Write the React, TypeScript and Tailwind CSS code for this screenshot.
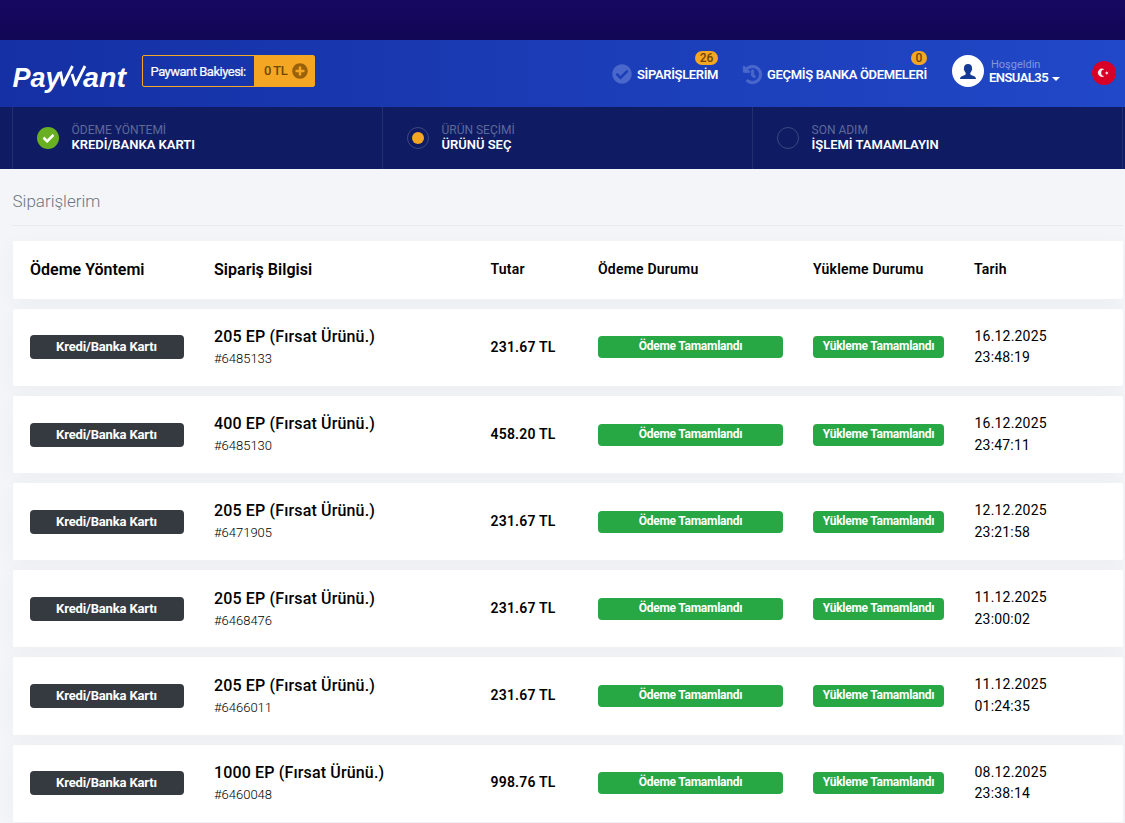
import { FaCheck, FaCheckCircle, FaHistory, FaPlusCircle } from "react-icons/fa";

interface Order {
  id: number;
  product: string;
  amount: string;
  date: string;
  time: string;
}

const orders: Order[] = [
  { id: 6485133, product: "205 EP (Fırsat Ürünü.)", amount: "231.67 TL", date: "16.12.2025", time: "23:48:19" },
  { id: 6485130, product: "400 EP (Fırsat Ürünü.)", amount: "458.20 TL", date: "16.12.2025", time: "23:47:11" },
  { id: 6471905, product: "205 EP (Fırsat Ürünü.)", amount: "231.67 TL", date: "12.12.2025", time: "23:21:58" },
  { id: 6468476, product: "205 EP (Fırsat Ürünü.)", amount: "231.67 TL", date: "11.12.2025", time: "23:00:02" },
  { id: 6466011, product: "205 EP (Fırsat Ürünü.)", amount: "231.67 TL", date: "11.12.2025", time: "01:24:35" },
  { id: 6460048, product: "1000 EP (Fırsat Ürünü.)", amount: "998.76 TL", date: "08.12.2025", time: "23:38:14" },
];

const rowGrid =
  "grid grid-cols-[154px_246.5px_77.5px_185px_131px_1fr] gap-x-[30px] items-center bg-white rounded-[2px] pl-[17px] shadow-[0_5px_20px_rgba(69,65,78,0.04)]";

const Logo = () => (
  <svg viewBox="0 -8 128 50" className="w-[128px] h-[50px] shrink-0" fill="none">
    <g className="font-['Liberation_Sans',sans-serif] font-bold italic text-[28px]" fill="#fff">
      <text x="0.5" y="24.500" textLength="48" lengthAdjust="spacingAndGlyphs">Pay</text>
      <text x="71" y="24.500" textLength="43" lengthAdjust="spacingAndGlyphs">ant</text>
    </g>
    <path d="M48.500 9.500 51 23 60.500 4M60 12 63.500 23 73 4" stroke="#fff" strokeWidth="2.800" strokeLinejoin="round" />
  </svg>
);

const Header = () => (
  <header className="h-[67px] bg-linear-to-r from-[#1530a4] to-[#2148c8] flex items-start text-white">
    <div className="pl-3 pt-[14px]">
      <Logo />
    </div>
    <div className="mt-[15px] ml-0.5 w-[173px] h-8 border border-[#f5a623] rounded-[2px] flex shrink-0">
      <span className="w-[111px] pl-[7.5px] text-[13px] leading-[31px] tracking-[-0.5px] whitespace-nowrap [-webkit-text-stroke:0.2px_white]">Paywant Bakiyesi:</span>
      <span className="flex-1 bg-[#f5a623] text-[#6f4700] flex items-center pl-[10px] gap-[5px] text-[13px] font-medium tracking-[-0.5px]">
        0 TL
        <FaPlusCircle className="size-4 text-[#99620a]" />
      </span>
    </div>
    <div className="ml-[297px] mt-6 flex items-center gap-[5px] relative shrink-0">
      <FaCheckCircle className="size-5 text-[#4a68cc]" />
      <span className="h-5 pt-px text-[13px] leading-5 font-semibold whitespace-nowrap tracking-[-0.35px] w-[82px]">SİPARİŞLERİM</span>
      <span className="absolute right-px -top-[13px] w-[23px] h-[14px] rounded-full bg-[#f5a623] text-[#6f4700] text-[12px] leading-[14px] text-center font-medium">26</span>
    </div>
    <div className="ml-6 mt-6 flex items-center gap-[5px] relative shrink-0">
      <FaHistory className="size-[19px] text-[#4a68cc] stroke-[#4a68cc] [stroke-width:22px] overflow-visible" />
      <span className="h-5 pt-px text-[13px] leading-5 font-semibold whitespace-nowrap tracking-[-0.33px] w-[160px]">GEÇMİŞ BANKA ÖDEMELERİ</span>
      <span className="absolute right-0 -top-[13px] w-4 h-[14px] rounded-full bg-[#f5a623] text-[#6f4700] text-[12px] leading-[14px] text-center font-medium">0</span>
    </div>
    <div className="ml-[25px] mt-[15px] size-8 rounded-full bg-white flex items-center justify-center shrink-0">
      <svg viewBox="0 0 16 15" className="w-4 h-[15px]" fill="#153a94">
        <path d="M8 0c2.500 0 4 1.500 4 3.800 0 .5 0 .9-.1 1.200.5.2.4 1.300-.3 1.600-.2.9-.7 1.700-1.300 2.300v1.200c0 .8 1 1.100 2.500 1.600 1.800.6 3.200 1.200 3.200 3.300H0c0-2.100 1.400-2.700 3.200-3.300 1.500-.5 2.500-.8 2.500-1.600V8.900C5.100 8.300 4.600 7.500 4.400 6.600 3.700 6.300 3.600 5.200 4.100 5 4 4.700 4 4.300 4 3.800 4 1.500 5.500 0 8 0Z" />
      </svg>
    </div>
    <div className="ml-[5px] mt-[18px] w-[74px] shrink-0">
      <div className="text-[11px] leading-[13px] text-[#8396dc] pl-[2px]">Hoşgeldin</div>
      <div className="text-[13px] leading-[14px] font-semibold flex items-center tracking-[-0.55px]">
        ENSUAL35
        <span className="ml-1 mt-px border-x-4 border-t-4 border-x-transparent border-t-white" />
      </div>
    </div>
    <svg viewBox="0 0 24 24" className="ml-[29px] mt-[21px] size-6 shrink-0">
      <circle cx="12" cy="12" r="12" fill="#d80027" />
      <path d="M12.400 8.600a4 4 0 1 0 0 6.400 3.200 3.200 0 1 1 0-6.400Z" fill="#f0f0f0" />
      <path d="m14 10 .9 1.200 1.500-.5-.9 1.200.9 1.300-1.500-.5-.9 1.200v-1.500l-1.500-.5 1.500-.5Z" fill="#f0f0f0" />
    </svg>
  </header>
);

interface StepProps {
  label: string;
  title: string;
  state: "done" | "active" | "pending";
}

const Step = ({ label, title, state }: StepProps) => (
  <div className="w-[370px] shrink-0 h-full border-l border-[#252f70] flex items-start pl-6">
    {state === "done" && (
      <span className="mt-5 size-[22px] rounded-full bg-[#68b022] flex items-center justify-center">
        <FaCheck className="size-[11px] text-white stroke-white [stroke-width:30px]" />
      </span>
    )}
    {state === "active" && (
      <span className="mt-5 size-[22px] rounded-full border border-[#3d467f] flex items-center justify-center">
        <span className="size-3 rounded-full bg-[#f5a623]" />
      </span>
    )}
    {state === "pending" && <span className="mt-5 size-[22px] rounded-full border border-[#3d467f]" />}
    <div className="ml-[12.5px] mt-4 whitespace-nowrap">
      <div className="text-[12px] leading-[14px] text-[#5f6899]">{label}</div>
      <div className="text-[13px] leading-[15px] font-semibold tracking-[-0.02px] text-white">{title}</div>
    </div>
  </div>
);

const App = () => {
  return (
    <div className="h-[823px] overflow-hidden bg-[#f4f5f9] font-[Roboto,sans-serif] text-black">
      <div className="h-10 bg-linear-to-b from-[#160861] to-[#120655]" />
      <Header />

      {/* Steps */}
      <nav className="h-[62px] bg-[#0f1c64] pl-3 flex overflow-hidden">
        <Step label="ÖDEME YÖNTEMİ" title="KREDİ/BANKA KARTI" state="done" />
        <Step label="ÜRÜN SEÇİMİ" title="ÜRÜNÜ SEÇ" state="active" />
        <Step label="SON ADIM" title="İŞLEMİ TAMAMLAYIN" state="pending" />
        <div className="w-px shrink-0 border-l border-[#252f70]" />
      </nav>

      <main className="pl-[13px] pr-[2px]">
        <h1 className="h-[57px] pt-5 -ml-px pl-[0.5px] text-[17px] leading-6 font-light text-[#6c757d] border-b border-[#e9eaee]">Siparişlerim</h1>

        {/* Orders */}
        <div className="mt-[15px] flex flex-col gap-[10px]">
          <div className={`${rowGrid} h-[57.8px] shrink-0 pb-px font-semibold text-[14px] tracking-[0.2px]`}>
            <span className="pt-[1.5px] text-[16px] tracking-normal">Ödeme Yöntemi</span>
            <span className="pt-[1.5px] text-[16px] tracking-[0.03px]">Sipariş Bilgisi</span>
            <span>Tutar</span>
            <span>Ödeme Durumu</span>
            <span>Yükleme Durumu</span>
            <span>Tarih</span>
          </div>
          {orders.map((order) => (
            <div key={order.id} className={`${rowGrid} h-[77.15px] shrink-0`}>
              <span className="h-6 rounded-[4px] bg-[#343a40] text-white text-[13px] leading-[23px] font-bold text-center tracking-[-0.15px] pr-px">
                Kredi/Banka Kartı
              </span>
              <div className="pb-[0.5px]">
                <p className="text-[16px] leading-6 font-medium tracking-[0.15px]">{order.product}</p>
                <p className="text-[13px] leading-5 font-light">#{order.id}</p>
              </div>
              <span className="text-[14px] font-semibold tracking-[0.2px] pb-[0.7px]">{order.amount}</span>
              <span className="h-[22px] rounded-[4px] bg-[#28a745] text-white text-[12px] leading-5 font-bold text-center tracking-[-0.25px]">
                Ödeme Tamamlandı
              </span>
              <span className="h-[22px] rounded-[4px] bg-[#28a745] text-white text-[12px] leading-5 font-bold text-center tracking-[-0.25px]">
                Yükleme Tamamlandı
              </span>
              <div className="text-[14px] leading-[21.5px] tracking-[0.2px] pl-[0.5px]">
                <p>{order.date}</p>
                <p>{order.time}</p>
              </div>
            </div>
          ))}
        </div>
      </main>
    </div>
  );
};

export default App;
